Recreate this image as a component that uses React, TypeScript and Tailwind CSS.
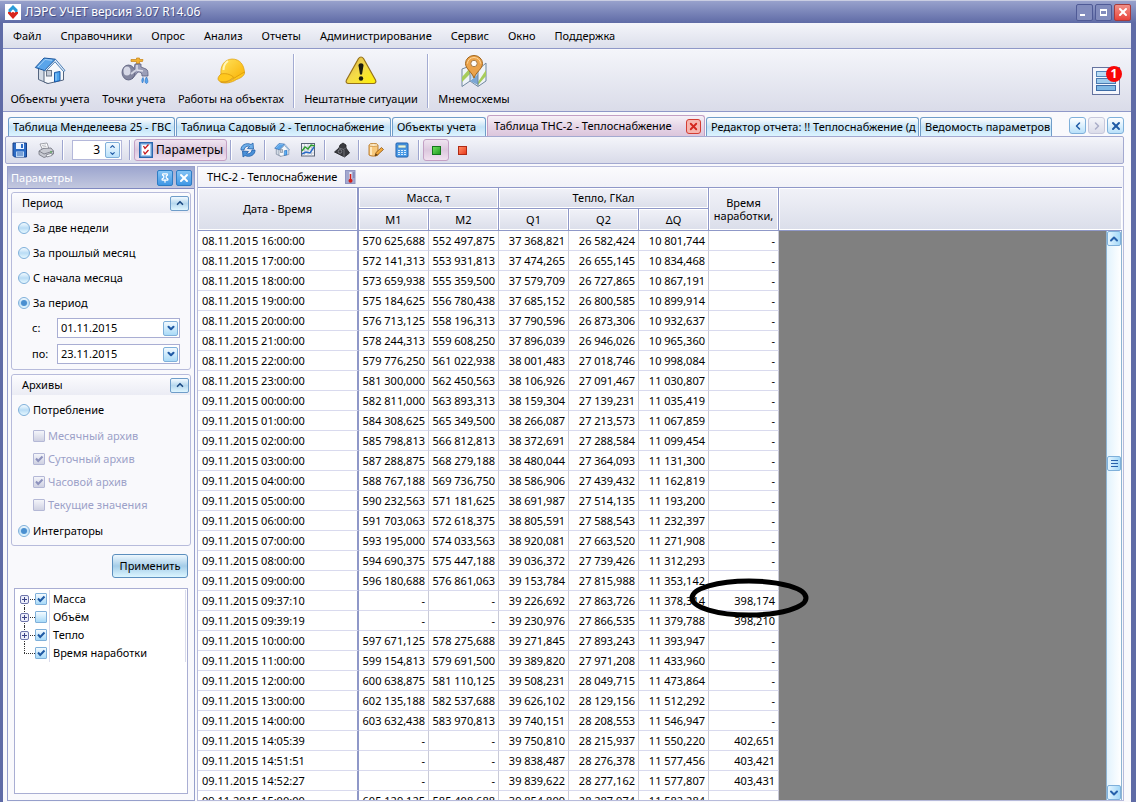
import { useState } from 'react'
import type { ReactNode } from 'react'
import { X, Pin, ChevronUp, ChevronDown, ChevronLeft, ChevronRight } from 'lucide-react'
import clsx from 'clsx'

const MENU = ['Файл', 'Справочники', 'Опрос', 'Анализ', 'Отчеты', 'Администрирование', 'Сервис', 'Окно', 'Поддержка']

const TABS = [
  { title: 'Таблица Менделеева 25 - ГВС', width: 'w-[167px]' },
  { title: 'Таблица Садовый 2 - Теплоснабжение', width: 'w-[215px]' },
  { title: 'Объекты учета', width: 'w-[94px]' },
  { title: 'Таблица ТНС-2 - Теплоснабжение', width: 'w-[218px]', active: true },
  { title: 'Редактор отчета: !! Теплоснабжение (д', width: 'w-[213px]' },
  { title: 'Ведомость параметров', width: 'w-[132px]' },
]

// date, M1, M2, Q1, Q2, dQ, working time
const ROWS: string[][] = [
  ['08.11.2015 16:00:00', '570 625,688', '552 497,875', '37 368,821', '26 582,424', '10 801,744', '-'],
  ['08.11.2015 17:00:00', '572 141,313', '553 931,813', '37 474,265', '26 655,145', '10 834,468', '-'],
  ['08.11.2015 18:00:00', '573 659,938', '555 359,500', '37 579,709', '26 727,865', '10 867,191', '-'],
  ['08.11.2015 19:00:00', '575 184,625', '556 780,438', '37 685,152', '26 800,585', '10 899,914', '-'],
  ['08.11.2015 20:00:00', '576 713,125', '558 196,313', '37 790,596', '26 873,306', '10 932,637', '-'],
  ['08.11.2015 21:00:00', '578 244,313', '559 608,250', '37 896,039', '26 946,026', '10 965,360', '-'],
  ['08.11.2015 22:00:00', '579 776,250', '561 022,938', '38 001,483', '27 018,746', '10 998,084', '-'],
  ['08.11.2015 23:00:00', '581 300,000', '562 450,563', '38 106,926', '27 091,467', '11 030,807', '-'],
  ['09.11.2015 00:00:00', '582 811,000', '563 893,313', '38 159,304', '27 139,231', '11 035,419', '-'],
  ['09.11.2015 01:00:00', '584 308,625', '565 349,500', '38 266,087', '27 213,573', '11 067,859', '-'],
  ['09.11.2015 02:00:00', '585 798,813', '566 812,813', '38 372,691', '27 288,584', '11 099,454', '-'],
  ['09.11.2015 03:00:00', '587 288,875', '568 279,188', '38 480,044', '27 364,093', '11 131,300', '-'],
  ['09.11.2015 04:00:00', '588 767,188', '569 736,750', '38 586,906', '27 439,432', '11 162,819', '-'],
  ['09.11.2015 05:00:00', '590 232,563', '571 181,625', '38 691,987', '27 514,135', '11 193,200', '-'],
  ['09.11.2015 06:00:00', '591 703,063', '572 618,375', '38 805,591', '27 588,543', '11 232,397', '-'],
  ['09.11.2015 07:00:00', '593 195,000', '574 033,563', '38 920,081', '27 663,520', '11 271,908', '-'],
  ['09.11.2015 08:00:00', '594 690,375', '575 447,188', '39 036,372', '27 739,426', '11 312,293', '-'],
  ['09.11.2015 09:00:00', '596 180,688', '576 861,063', '39 153,784', '27 815,988', '11 353,142', '-'],
  ['09.11.2015 09:37:10', '-', '-', '39 226,692', '27 863,726', '11 378,314', '398,174'],
  ['09.11.2015 09:39:19', '-', '-', '39 230,976', '27 866,535', '11 379,788', '398,210'],
  ['09.11.2015 10:00:00', '597 671,125', '578 275,688', '39 271,845', '27 893,243', '11 393,947', '-'],
  ['09.11.2015 11:00:00', '599 154,813', '579 691,500', '39 389,820', '27 971,208', '11 433,960', '-'],
  ['09.11.2015 12:00:00', '600 638,875', '581 110,125', '39 508,231', '28 049,715', '11 473,864', '-'],
  ['09.11.2015 13:00:00', '602 135,188', '582 537,688', '39 626,102', '28 129,156', '11 512,292', '-'],
  ['09.11.2015 14:00:00', '603 632,438', '583 970,813', '39 740,151', '28 208,553', '11 546,947', '-'],
  ['09.11.2015 14:05:39', '-', '-', '39 750,810', '28 215,937', '11 550,220', '402,651'],
  ['09.11.2015 14:51:51', '-', '-', '39 838,487', '28 276,378', '11 577,456', '403,421'],
  ['09.11.2015 14:52:27', '-', '-', '39 839,622', '28 277,162', '11 577,807', '403,431'],
  ['09.11.2015 15:00:00', '605 129,125', '585 408,688', '39 854,809', '28 287,974', '11 582,284', '-'],
]

const MARKED_DATE = '09.11.2015 09:37:10'

const PERIODS = ['За две недели', 'За прошлый месяц', 'С начала месяца', 'За период']

const ARCHIVES = [
  { label: 'Месячный архив', checked: false },
  { label: 'Суточный архив', checked: true },
  { label: 'Часовой архив', checked: true },
  { label: 'Текущие значения', checked: false },
]

const TREE = [
  { label: 'Масса', checked: true, expandable: true },
  { label: 'Объём', checked: false, expandable: true },
  { label: 'Тепло', checked: true, expandable: true },
  { label: 'Время наработки', checked: true, expandable: false },
]

/* ---------- icons ---------- */

function AppLogo() {
  return (
    <svg viewBox="0 0 16 16" className="w-4 h-4">
      <rect width="16" height="16" fill="#fff" />
      <path d="M8 1 12.500 5.500V8H10.500L8 5.500 5.500 8H3.500V5.500z" fill="#2a9bd8" />
      <path d="M3 8h2.500l1.500 1V6.500h2V9l1.500-1H13v1.500L8 15 3 9.500z" fill="#d8261c" />
      <circle cx="8" cy="7" r="1.300" fill="#fff" />
    </svg>
  )
}

function HouseIcon({ className }: { className: string }) {
  return (
    <svg viewBox="0 0 32 32" className={className}>
      <path d="M4.500 13v11.500L14 28.500V12z" fill="#d3dbe6" stroke="#54657f" />
      <path d="M10 15 21 5l8.500 10.500V25L14 28.500 10 27z" fill="#f6f8fb" stroke="#54657f" />
      <path d="M1.300 12.500 10 3l11.500 1.200L10.500 15.500z" fill="#5aa5ea" stroke="#1c569c" />
      <path d="M4 12 11 4.500l7 .800" stroke="#a9d3f8" fill="none" />
      <path d="M21.500 4.200 31 15.500l-1.500 1L21 6.800 12 16l-1.500-.500z" fill="#e2eefb" stroke="#2763a5" strokeWidth=".8" />
      <rect x="12.500" y="15.500" width="5" height="5.500" fill="#c5ccd7" stroke="#6b7788" />
      <path d="M20.500 17.500 26 16.500v9L20.500 27z" fill="#4aa3ee" stroke="#1a5aa8" />
      <path d="M22 18.500v7" stroke="#9fd2f8" />
    </svg>
  )
}

function FaucetIcon() {
  return (
    <svg viewBox="0 0 32 32" className="w-8 h-8">
      <path d="M13 4.500h5.500V3h3v1.500H25L24.500 6.500h-3V9h-3V6.500H13z" fill="#f2b233" stroke="#c98412" strokeWidth=".7" />
      <path d="M17 9h6v3l5 2c2 1 2 3 2 7h-6c0-3-1-4-4-4l-6 7z" fill="#9b9eb8" stroke="#5d6080" strokeWidth=".8" />
      <path d="M19 10v5l6 1" stroke="#dfe0ec" strokeWidth="1.500" fill="none" />
      <ellipse cx="10.500" cy="17.500" rx="6.500" ry="7.500" fill="#83869f" stroke="#575a78" strokeWidth=".8" />
      <ellipse cx="9" cy="16" rx="3.500" ry="4.500" fill="#d6d8e6" />
      <path d="M13 19l5-4" stroke="#d0d2e0" strokeWidth="2" />
      <path d="M25 22.500c-1.500 2-1.500 3.500-.500 5.500 1-2 1.500-3 .500-5.500zM28.500 22c-2 3-2 6 0 6.500 2-.500 1.500-3.500 0-6.500z" fill="#58a6ee" stroke="#2f73c5" strokeWidth=".7" />
    </svg>
  )
}

function HelmetIcon() {
  return (
    <svg viewBox="0 0 32 32" className="w-8 h-8">
      <defs>
        <linearGradient id="helmet" x1="0" y1="0" x2="1" y2="1">
          <stop offset="0" stopColor="#ffe35e" />
          <stop offset="1" stopColor="#f9b000" />
        </linearGradient>
      </defs>
      <path d="M6 20C5 11 9 4.500 17 4c8 0 12 6 12.500 13l-4 4-12 4z" fill="url(#helmet)" stroke="#e0a010" strokeWidth=".7" />
      <path d="M6 19c-3.500 3-4 6-1 7.500 5 2 12-1 16-4.500l8.500-5c.500 3-3 6-8 7.500-5 3.500-12 4.500-16 2.500 4 .500 10-1 13-5-4-3-8-4-12.500-3z" fill="#ffc81e" stroke="#d69408" strokeWidth=".7" />
      <path d="M13 6c-3 2-4.500 6-4.500 9" stroke="#fff6b8" strokeWidth="2" fill="none" />
    </svg>
  )
}

function WarningIcon() {
  return (
    <svg viewBox="0 0 32 32" className="w-8 h-8">
      <defs>
        <linearGradient id="warn" x1="0" y1="0" x2="1" y2="1">
          <stop offset="0" stopColor="#d9b04a" />
          <stop offset=".5" stopColor="#f5dc48" />
          <stop offset="1" stopColor="#fff200" />
        </linearGradient>
      </defs>
      <path d="M13.500 3.500c1.500-2 3.500-2 5 0L30.500 25c1 2 0 3.500-2 3.500h-25c-2 0-3-1.500-2-3.500z" fill="url(#warn)" stroke="#96711a" strokeWidth="1.200" />
      <path d="M13.500 10.500c0-3 5-3 5 0L17 19.500h-2z" fill="#1c1c10" />
      <circle cx="16" cy="23.500" r="2.200" fill="#1c1c10" />
    </svg>
  )
}

function MapIcon() {
  return (
    <svg viewBox="0 0 32 32" className="w-8 h-8">
      <path d="M4 14l8-3 8 4 8-7v18l-8 5.500-8-5.500-8 5.500z" fill="#eef3f8" stroke="#70879e" />
      <path d="M4 22l8-9v6l-8 8z" fill="#a7cc5a" />
      <path d="M12 26l8-7v11z" fill="#7ba7d4" />
      <path d="M12 20l8-5v4l-8 6z" fill="#b9d5ee" />
      <path d="M20 27l8-12v6l-8 9z" fill="#a7cc5a" />
      <path d="M12 11v15M20 15v16" stroke="#70879e" />
      <path d="M16 23C14 17 7.500 14 7.500 8.500a8.500 8 0 0 1 17 0C24.500 14 18 17 16 23z" fill="#eba34b" stroke="#a2651b" />
      <path d="M9.500 8.500a6.500 6 0 0 1 13 0" stroke="#ffd79a" fill="none" />
      <circle cx="16" cy="8.500" r="3.200" fill="#fff" stroke="#a77c48" />
    </svg>
  )
}

function NotifyIcon() {
  return (
    <svg viewBox="0 0 28 28" className="w-7 h-7">
      <rect x=".5" y=".5" width="27" height="27" fill="#f4f6fc" stroke="#65739f" />
      <rect x="4.500" y="4.500" width="19" height="5" fill="#b9dcf4" stroke="#5585b8" />
      <rect x="4.500" y="11.500" width="19" height="5" fill="#9ccbec" stroke="#4a7ab0" />
      <rect x="4.500" y="18.500" width="19" height="5" fill="#7fb8e4" stroke="#3d6ca6" />
    </svg>
  )
}

function SaveIcon() {
  return (
    <svg viewBox="0 0 16 16" className="w-4 h-4">
      <path d="M1 1h13.500v14H2.500L1 13.500z" fill="#2c6bc4" stroke="#173f86" />
      <rect x="4" y="1" width="8" height="6" fill="#eef5ff" />
      <rect x="9" y="2" width="2" height="4" fill="#2c6bc4" />
      <rect x="4" y="9.500" width="8" height="5.500" fill="#bcd6f5" />
      <path d="M5 11h6M5 13h6" stroke="#3b6fb8" />
    </svg>
  )
}

function PrinterIcon() {
  return (
    <svg viewBox="0 0 16 16" className="w-4 h-4">
      <path d="M2 2l7-1 2 6-6 2z" fill="#fff" stroke="#8a8d96" strokeWidth=".8" />
      <path d="M4 3.500l4-.600M4.500 5l4-.600" stroke="#a5a8b0" strokeWidth=".7" />
      <path d="M1 9l4-2.500L13 6l2.500 3v3L6 15.500 1 12.500z" fill="#c8cad2" stroke="#6e717c" strokeWidth=".8" />
      <path d="M1 9l5 3 9.500-3" stroke="#6e717c" fill="none" strokeWidth=".8" />
      <path d="M8 13l6-2v2.500L9 15z" fill="#f6f7fa" stroke="#6e717c" strokeWidth=".7" />
      <rect x="12" y="9.500" width="2" height="1" fill="#4ab044" />
    </svg>
  )
}

function ParamsIcon() {
  return (
    <svg viewBox="0 0 14 16" className="w-[14px] h-4">
      <rect x=".75" y=".75" width="12.500" height="14.500" fill="#a8cdf0" stroke="#2a66ae" strokeWidth="1.500" />
      <rect x="3" y="3" width="8" height="10" fill="#fff" />
      <path d="M4.500 4 6 6.500 9.500 2.500M4.500 9.500 6 12l3.500-4" stroke="#c4161c" strokeWidth="1.300" fill="none" />
    </svg>
  )
}

function RefreshIcon() {
  return (
    <svg viewBox="0 0 16 16" className="w-4 h-4">
      <path d="M1 8C.500 3.500 6 0 11 2.500L13 1l.500 6-6-.500 2-2C7 3.500 4.500 5 4 8z" fill="#6fb0ea" stroke="#1f5ea8" strokeWidth=".8" />
      <path d="M15 8c.500 4.500-5 8-10 5.500L3 15l-.500-6 6 .500-2 2C9 12.500 11.500 11 12 8z" fill="#4a90d8" stroke="#1f5ea8" strokeWidth=".8" />
    </svg>
  )
}

function ChartIcon() {
  return (
    <svg viewBox="0 0 16 16" className="w-4 h-4">
      <rect x="1.500" y="1.500" width="13" height="12.500" fill="#f2f4f8" stroke="#5a6478" />
      <path d="M4.500 2v12M8 2v12M11.500 2v12M2 5h12M2 8h12M2 11h12" stroke="#b4bac8" strokeWidth=".7" />
      <path d="M2 9l3-4 3 2 3-4 4 1" stroke="#2e9e2e" strokeWidth="1.400" fill="none" />
      <path d="M2 12l4-2 4 1 4-6" stroke="#2a6cc8" strokeWidth="1.400" fill="none" />
    </svg>
  )
}

function WeightIcon() {
  return (
    <svg viewBox="0 0 16 16" className="w-4 h-4">
      <path d="M6 3l3-2 3 2v3l3.500 5-5 4L.500 10 5 6z" fill="#3a3b40" stroke="#1e1f22" strokeWidth=".8" />
      <path d="M5 6l5 1.500 2-2M10 8v7" stroke="#707279" fill="none" />
      <circle cx="6" cy="9.500" r="1.800" fill="none" stroke="#8b8d94" strokeWidth=".8" />
    </svg>
  )
}

function EditIcon() {
  return (
    <svg viewBox="0 0 16 16" className="w-4 h-4">
      <path d="M1 3c2-2 7-2 9 0v10c-2 1.500-7 1.500-9 0z" fill="#f7c97e" stroke="#b77522" strokeWidth=".9" />
      <ellipse cx="5.500" cy="3" rx="4.500" ry="1.500" fill="#fdeac6" stroke="#b77522" strokeWidth=".6" />
      <path d="M3 5v8" stroke="#fff1d4" strokeWidth="1.500" />
      <path d="M7 14l1-3.500 5.500-5 2 2-5.500 5z" fill="#f2a93c" stroke="#8d5514" strokeWidth=".8" />
      <path d="M7 14l.800-2.600L9.500 13z" fill="#4d3415" />
    </svg>
  )
}

function CalcIcon() {
  return (
    <svg viewBox="0 0 16 16" className="w-4 h-4">
      <rect x="2" y="1" width="12" height="14" rx="1" fill="#4d9ce6" stroke="#1d5fae" />
      <rect x="4" y="3" width="8" height="3" fill="#e9f6d8" stroke="#2d6cb4" strokeWidth=".6" />
      <path d="M4 8.500h8M4 10.500h8M4 12.500h8" stroke="#dceefe" strokeWidth="1.200" strokeDasharray="2 1" />
    </svg>
  )
}

function ThermoIcon() {
  return (
    <svg viewBox="0 0 12 14" className="w-3 h-[14px]">
      <rect x=".5" y=".5" width="9.500" height="13" fill="#a3a8cf" stroke="#8f95c2" />
      <path d="M5.500 2v8" stroke="#e9eaf5" strokeWidth="2.500" />
      <path d="M5.500 4v7" stroke="#d3211b" strokeWidth="1.500" />
      <circle cx="5.500" cy="10.800" r="2" fill="#d3211b" />
      <path d="M8 3h1.500M8 5h1.500M8 7h1.500" stroke="#4e5590" strokeWidth=".7" />
    </svg>
  )
}

/* ---------- controls ---------- */

function Separator() {
  return <div className="w-0.5 h-5 mx-[3px] bg-[#9da5cf] border-r border-white" />
}

function IconButton({ label, children, pressed }: { label: string; children: ReactNode; pressed?: boolean }) {
  return (
    <button
      aria-label={label}
      aria-pressed={pressed}
      className={clsx(
        'flex items-center justify-center w-[26px] h-[22px] rounded-[3px]',
        pressed && 'border border-[#c3a0c4] bg-linear-to-b from-[#efe4f0] via-[#dcc8de] to-[#f0e0ef]',
      )}
    >
      {children}
    </button>
  )
}

function BigButton({ label, width, children }: { label: string; width: string; children: ReactNode }) {
  return (
    <button className={clsx('flex flex-col items-center gap-[5px] whitespace-nowrap', width)}>
      {children}
      {label}
    </button>
  )
}

function BigSeparator() {
  return <div className="w-0.5 h-[54px] mx-[7px] bg-[#a3abd2] border-r border-white" />
}

function Check({ id, checked, disabled }: { id: string; checked: boolean; disabled?: boolean }) {
  const [on, setOn] = useState(checked)
  return (
    <span className="relative flex w-3 h-3">
      <input
        id={id}
        type="checkbox"
        checked={on}
        disabled={disabled}
        onChange={e => setOn(e.target.checked)}
        className={clsx(
          'appearance-none w-3 h-3 border rounded-[1px]',
          disabled
            ? 'border-[#b4b8d6] bg-linear-to-b from-[#f4f5fa] to-[#cfd1e2]'
            : 'border-[#7fb0da] bg-linear-to-b from-[#f4fbff] to-[#a8daf8]',
        )}
      />
      {on && (
        <svg viewBox="0 0 12 12" className="absolute inset-0 w-3 h-3 pointer-events-none">
          <path d="M3 5.500 5.200 8 9.500 3.500" stroke={disabled ? '#8d92bd' : '#1f5aa5'} strokeWidth="2" fill="none" />
        </svg>
      )}
    </span>
  )
}

function Radio({ name, label, checked, onSelect }: { name: string; label: string; checked: boolean; onSelect: () => void }) {
  return (
    <label className="flex items-center gap-[3px] h-[25px] pl-1.5">
      <span className="relative flex w-3 h-3">
        <input
          type="radio"
          name={name}
          checked={checked}
          onChange={onSelect}
          className="appearance-none w-3 h-3 rounded-full border border-[#7fb0da] bg-linear-to-b from-[#f4fbff] via-[#b9dcf5] to-[#e6f8ff]"
        />
        {checked && <span className="absolute inset-[3px] rounded-full bg-[#4a8fd0] pointer-events-none" />}
      </span>
      {label}
    </label>
  )
}

function DateField({ id, label, value }: { id: string; label: string; value: string }) {
  return (
    <div className="flex items-center h-[26px] pl-5">
      <label htmlFor={id} className="w-[25px]">{label}</label>
      <div className="flex items-center w-[123px] h-5 border border-[#a9aed3] bg-white pr-px">
        <input id={id} defaultValue={value} className="flex-1 min-w-0 px-[3px] outline-none" />
        <button aria-label="Открыть календарь" className="flex items-center justify-center w-[15px] h-[15px] rounded-[2px] border border-[#7fb0da] bg-linear-to-b from-[#f2faff] to-[#a9daf7] text-[#1f5aa5]">
          <ChevronDown className="w-2.5 h-2.5" strokeWidth={5} />
        </button>
      </div>
    </div>
  )
}

function Group({ title, children }: { title: string; children: ReactNode }) {
  return (
    <section className="border border-[#b7bbdb] rounded-[3px]">
      <header className="flex items-center justify-between h-5 pl-2.5 pr-px rounded-t-[3px] bg-linear-to-b from-[#fcfcfe] to-[#ebecf4]">
        <h2>{title}</h2>
        <button aria-label="Свернуть" className="flex items-center justify-center w-[19px] h-[15px] rounded-[2px] border border-[#6f9dc9] bg-linear-to-b from-[#f2faff] via-[#b6d8ee] to-[#dff6ff] text-[#1c4a82]">
          <ChevronUp className="w-2.5 h-2.5" strokeWidth={4} />
        </button>
      </header>
      {children}
    </section>
  )
}

function SidePanel() {
  const [period, setPeriod] = useState('За период')
  const [mode, setMode] = useState('Интеграторы')

  return (
    <aside className="flex flex-col w-[188px] border border-[#969fcb] bg-[#f9f9fc]">
      <header className="flex items-center gap-[3px] h-[22px] pl-[3px] pr-0.5 border-b border-[#8089c0] bg-linear-to-b from-[#9da6cf] to-[#c3c8df] text-white">
        <span className="flex-1">Параметры</span>
        <button aria-label="Закрепить" className="flex items-center justify-center w-4 h-4 rounded-[2px] border border-[#2d7cc4] bg-linear-to-b from-[#85c4f5] to-[#3f97e4]">
          <Pin className="w-2.5 h-2.5" strokeWidth={3} />
        </button>
        <button aria-label="Закрыть" className="flex items-center justify-center w-4 h-4 rounded-[2px] border border-[#2d7cc4] bg-linear-to-b from-[#85c4f5] to-[#3f97e4]">
          <X className="w-3 h-3" strokeWidth={4} />
        </button>
      </header>

      <div className="flex-1 min-h-0 flex flex-col gap-1 px-[3px] pt-[3px] pb-1.5">
        <Group title="Период">
          <div className="py-0.5">
            {PERIODS.map(p => (
              <Radio key={p} name="period" label={p} checked={period === p} onSelect={() => setPeriod(p)} />
            ))}
            <DateField id="date-from" label="с:" value="01.11.2015" />
            <DateField id="date-to" label="по:" value="23.11.2015" />
          </div>
        </Group>

        <Group title="Архивы">
          <div className="py-0.5">
            <Radio name="mode" label="Потребление" checked={mode === 'Потребление'} onSelect={() => setMode('Потребление')} />
            <div className="py-0.5">
              {ARCHIVES.map((a, i) => (
                <div key={a.label} className="flex items-center gap-[3px] h-[23px] pl-[21px] text-[#9ca1c8]">
                  <Check id={`archive-${i}`} checked={a.checked} disabled />
                  <label htmlFor={`archive-${i}`}>{a.label}</label>
                </div>
              ))}
            </div>
            <Radio name="mode" label="Интеграторы" checked={mode === 'Интеграторы'} onSelect={() => setMode('Интеграторы')} />
          </div>
        </Group>

        <button className="self-end w-[76px] h-6 mt-1 mb-1.5 mr-[3px] rounded-[3px] border border-[#5c8fbe] bg-linear-to-b from-[#eef8fe] via-[#a5cde8] to-[#dcf6ff]">
          Применить
        </button>

        <div className="flex-1 mx-[3px] border border-[#a9aed3] bg-white">
          <ul className="mt-px mr-px border-r border-[#d9dbec]">
            {TREE.map((node, i) => (
              <li key={node.label} className="flex items-center h-[18px] pl-[5px]">
                <span className="relative flex items-center w-[15px] h-full">
                  <span className={clsx('absolute left-1 w-px border-l border-dotted border-[#333]', i === 0 ? 'top-1/2 bottom-0' : node.expandable ? 'inset-y-0' : 'top-0 bottom-1/2')} />
                  <span className="absolute left-1 right-0 top-1/2 border-t border-dotted border-[#333]" />
                  {node.expandable && (
                    <button aria-label="Развернуть" className="relative w-[9px] h-[9px] rounded-[2px] border border-[#6e75ab] bg-[#eceefa]">
                      <span className="absolute left-px right-px top-[3px] h-px bg-[#3b4386]" />
                      <span className="absolute top-px bottom-px left-[3px] w-px bg-[#3b4386]" />
                    </button>
                  )}
                </span>
                <Check id={`node-${i}`} checked={node.checked} />
                <label htmlFor={`node-${i}`} className="flex items-center h-full ml-0.5 pl-[3px] border-l border-[#d9dbec]">
                  {node.label}
                </label>
              </li>
            ))}
          </ul>
        </div>
      </div>
    </aside>
  )
}

const TH = 'font-normal border-r border-b border-[#8f98c8] bg-linear-to-b from-[#f1f2f8] to-[#dbdeea] shadow-[inset_1px_1px_0_#ffffff,inset_-1px_-1px_0_#ffffff]'

function DataTable() {
  return (
    <table className="w-full table-fixed border-separate border-spacing-0 border-t border-[#8f98c8]">
      <colgroup>
        <col className="w-[161px]" />
        {ROWS[0].slice(1).map((_, i) => <col key={i} className="w-[70px]" />)}
        <col />
      </colgroup>
      <thead>
        <tr className="h-[21px]">
          <th rowSpan={2} className={clsx(TH, 'border-r-2')}>Дата - Время</th>
          <th colSpan={2} className={TH}>Масса, т</th>
          <th colSpan={3} className={TH}>Тепло, ГКал</th>
          <th rowSpan={2} className={clsx(TH, 'leading-[13px]')}>Время<br />наработки,</th>
          <th rowSpan={2} aria-label="Пусто" className={clsx(TH, 'border-r-0')} />
        </tr>
        <tr className="h-[22px]">
          {['M1', 'M2', 'Q1', 'Q2', 'ΔQ'].map(h => <th key={h} className={TH}>{h}</th>)}
        </tr>
      </thead>
      <tbody>
        {ROWS.map(row => (
          <tr key={row[0]} className="h-5">
            {row.map((cell, i) => (
              <td
                key={i}
                className={clsx(
                  'relative p-0 border-b border-b-[#d9daee] bg-white whitespace-nowrap',
                  i === 0 ? 'pl-1 border-r-2 border-r-[#8f98c8]' : 'pr-[3px] text-right border-r border-r-[#c9cad8]',
                )}
              >
                {cell}
                {row[0] === MARKED_DATE && i === 6 && (
                  <svg viewBox="0 0 120 40" className="absolute z-10 -left-5 -top-[13px] w-[120px] h-10 max-w-none pointer-events-none">
                    <ellipse cx="60" cy="20" rx="57" ry="17" fill="none" stroke="#000" strokeWidth="5" />
                  </svg>
                )}
              </td>
            ))}
            <td className="bg-[#808080]" />
          </tr>
        ))}
      </tbody>
    </table>
  )
}

function ScrollBar() {
  const cap = 'flex items-center justify-center w-full h-[15px] rounded-[2px] border border-[#7fb0da] bg-linear-to-r from-[#e4f5ff] to-[#a3d8f8] text-[#2660ab]'
  return (
    <div className="absolute top-[44px] bottom-0 right-0 flex flex-col w-4 border-x border-[#8fb4d2] bg-linear-to-r from-[#e2f3fd] to-white">
      <button aria-label="Вверх" className={cap}><ChevronUp className="w-3 h-3" strokeWidth={4} /></button>
      <div className="grow-[209]" />
      <div className={cap}>
        <span className="w-[7px] h-[7px] border-y border-[#2660ab] flex items-center"><span className="w-full h-px bg-[#2660ab]" /></span>
      </div>
      <div className="grow-[313]" />
      <button aria-label="Вниз" className={cap}><ChevronDown className="w-3 h-3" strokeWidth={4} /></button>
    </div>
  )
}

function TabStrip() {
  const nav = 'flex items-center justify-center w-[17px] h-[17px] rounded-[3px] border'
  return (
    <div className="flex items-end h-6 pl-[3px] gap-px">
      {TABS.map(tab => (
        <div
          key={tab.title}
          className={clsx(
            'flex items-center shrink-0 rounded-t-[3px] border border-b-0',
            tab.width,
            tab.active
              ? 'h-[21px] pl-1.5 pr-[3px] border-[#c3a0c4] bg-linear-to-b from-[#f7f1f7] via-[#e6d6e7] to-[#dcc6dc]'
              : 'h-[19px] pl-1 border-[#6f9dc9] bg-linear-to-b from-white via-[#c3e2f6] to-[#dcf4ff]',
          )}
        >
          <button className="flex-1 min-w-0 overflow-hidden whitespace-nowrap text-left">{tab.title}</button>
          {tab.active && (
            <button aria-label="Закрыть вкладку" className="flex items-center justify-center w-[15px] h-[15px] rounded-[3px] border border-[#d33d33] bg-[#f6b5ae] text-[#d3261d]">
              <X className="w-[11px] h-[11px]" strokeWidth={4} />
            </button>
          )}
        </div>
      ))}
      <div className="flex-1" />
      <div className="flex gap-0.5 pb-0.5">
        <button aria-label="Назад" className={clsx(nav, 'border-[#7fb0da] bg-linear-to-b from-white to-[#b9e1fa] text-[#1f5aa5]')}><ChevronLeft className="w-3 h-3" strokeWidth={3} /></button>
        <button aria-label="Вперед" className={clsx(nav, 'border-[#c6c8dc] bg-linear-to-b from-[#f4f5fa] to-[#dcddea] text-[#aaadc8]')}><ChevronRight className="w-3 h-3" strokeWidth={3} /></button>
        <button aria-label="Закрыть" className={clsx(nav, 'border-[#7fb0da] bg-linear-to-b from-white to-[#b9e1fa] text-[#1f5aa5]')}><X className="w-3 h-3" strokeWidth={4} /></button>
      </div>
    </div>
  )
}

function ToolBar() {
  return (
    <div role="toolbar" className="flex items-center shrink-0 h-7 px-px border border-[#a3a9d0] rounded-[2px] bg-linear-to-b from-[#f4f5fa] to-[#d9dbe9]">
      <IconButton label="Сохранить"><SaveIcon /></IconButton>
      <IconButton label="Печать"><PrinterIcon /></IconButton>
      <Separator />
      <div className="flex items-center w-[50px] h-5 ml-[5px] mr-1 pr-px border border-[#b4b8da] bg-white">
        <input aria-label="Точность" defaultValue="3" className="flex-1 min-w-0 pr-[5px] text-right text-xs outline-none" />
        <span className="flex flex-col items-center justify-center w-[15px] h-4 rounded-[2px] border border-[#7fb0da] bg-linear-to-b from-[#f2faff] to-[#b9e1fa] text-[#1f5aa5]">
          <ChevronUp className="w-[7px] h-[7px]" strokeWidth={4} />
          <ChevronDown className="w-[7px] h-[7px]" strokeWidth={4} />
        </span>
      </div>
      <Separator />
      <button className="flex items-center gap-[3px] w-[93px] h-[22px] pl-1 rounded-[3px] border border-[#c3a0c4] bg-linear-to-b from-[#efe4f0] via-[#dcc8de] to-[#f0e0ef] text-xs">
        <ParamsIcon />
        Параметры
      </button>
      <Separator />
      <IconButton label="Обновить"><RefreshIcon /></IconButton>
      <Separator />
      <IconButton label="Объект"><HouseIcon className="w-4 h-4" /></IconButton>
      <IconButton label="График"><ChartIcon /></IconButton>
      <Separator />
      <IconButton label="Нагрузка"><WeightIcon /></IconButton>
      <Separator />
      <IconButton label="Изменить"><EditIcon /></IconButton>
      <IconButton label="Расчет"><CalcIcon /></IconButton>
      <Separator />
      <IconButton label="Норма" pressed><span className="w-[9px] h-[9px] border border-[#16761c] bg-linear-to-br from-[#6be05a] to-[#1f9d22]" /></IconButton>
      <IconButton label="Ошибка"><span className="w-[9px] h-[9px] border border-[#b02a14] bg-linear-to-br from-[#ff8a63] to-[#e8381a]" /></IconButton>
    </div>
  )
}

export default function App() {
  const winButton = 'flex items-center justify-center w-[17px] h-[17px] rounded-[2px] border'

  return (
    <div className="flex flex-col h-screen overflow-hidden bg-[#5f6ba6] font-['Noto_Sans','DejaVu_Sans',sans-serif] text-[11px] leading-[14px] text-black">
      {/* Title bar */}
      <header className="flex items-center shrink-0 h-[23px] pl-[5px] pr-[5px] gap-0.5 border-t border-[#c9cde2] bg-linear-to-b from-[#98a1cc] to-[#5f6ba6]">
        <AppLogo />
        <h1 className="flex-1 pl-0.5 text-xs text-white [text-shadow:1px_1px_1px_#3b467f]">ЛЭРС УЧЕТ версия 3.07 R14.06</h1>
        <button aria-label="Свернуть" className={clsx(winButton, 'border-[#4f5a96] bg-[#828cbd]')}><span className="w-[5px] h-0.5 mt-1.5 mr-1 bg-white" /></button>
        <button aria-label="Развернуть" className={clsx(winButton, 'border-[#4f5a96] bg-[#828cbd]')}><span className="w-[7px] h-[7px] border-2 border-white border-x" /></button>
        <button aria-label="Закрыть" className={clsx(winButton, 'border-[#a83a3a] bg-linear-to-b from-[#f08f88] to-[#e8413b] text-white')}><X className="w-3 h-3" strokeWidth={4} /></button>
      </header>

      <div className="flex-1 min-h-0 flex flex-col ml-[3px] mr-[5px] bg-[#f9f9fc]">
        {/* Main menu */}
        <nav className="flex items-center shrink-0 h-[26px] pl-2.5 gap-[19px] border-b border-[#8f98c8] bg-linear-to-b from-[#f4f5fa] to-[#dcdfeb]">
          {MENU.map(item => <button key={item}>{item}</button>)}
        </nav>

        <div className="flex items-center shrink-0 h-[62px] mt-px pl-[5px] pr-[11px] border-b border-[#8f98c8] bg-linear-to-b from-[#f4f5fa] to-[#dadce9]">
          <BigButton label="Объекты учета" width="w-[84px]"><HouseIcon className="w-8 h-8" /></BigButton>
          <BigButton label="Точки учета" width="w-[84px]"><FaucetIcon /></BigButton>
          <BigButton label="Работы на объектах" width="w-[110px]"><HelmetIcon /></BigButton>
          <BigSeparator />
          <BigButton label="Нештатные ситуации" width="w-[118px]"><WarningIcon /></BigButton>
          <BigSeparator />
          <BigButton label="Мнемосхемы" width="w-[76px]"><MapIcon /></BigButton>
          <div className="flex-1" />
          <button aria-label="Уведомления" className="relative">
            <NotifyIcon />
            <span className="absolute -top-px -right-0.5 w-4 h-4 rounded-full bg-[#f90606] text-white text-xs leading-4 font-bold">1</span>
          </button>
        </div>

        {/* Document area */}
        <div className="flex-1 min-h-0 flex flex-col pl-0.5 pr-[7px]">
          <TabStrip />
          <ToolBar />
          <main className="flex-1 min-h-0 flex gap-0.5 pt-0.5 pl-0.5 pb-px">
            <SidePanel />
            <section className="flex-1 min-w-0 flex flex-col border border-[#b7bbdb]">
              <h2 className="flex items-center gap-2 shrink-0 h-5 pl-[9px] bg-linear-to-b from-[#fbfbfd] to-[#f1f2f8]">
                ТНС-2 - Теплоснабжение
                <ThermoIcon />
              </h2>
              <div className="relative flex-1 min-h-0 overflow-hidden bg-[#808080] mr-px">
                <DataTable />
                <ScrollBar />
              </div>
            </section>
          </main>
        </div>
      </div>
    </div>
  )
}
